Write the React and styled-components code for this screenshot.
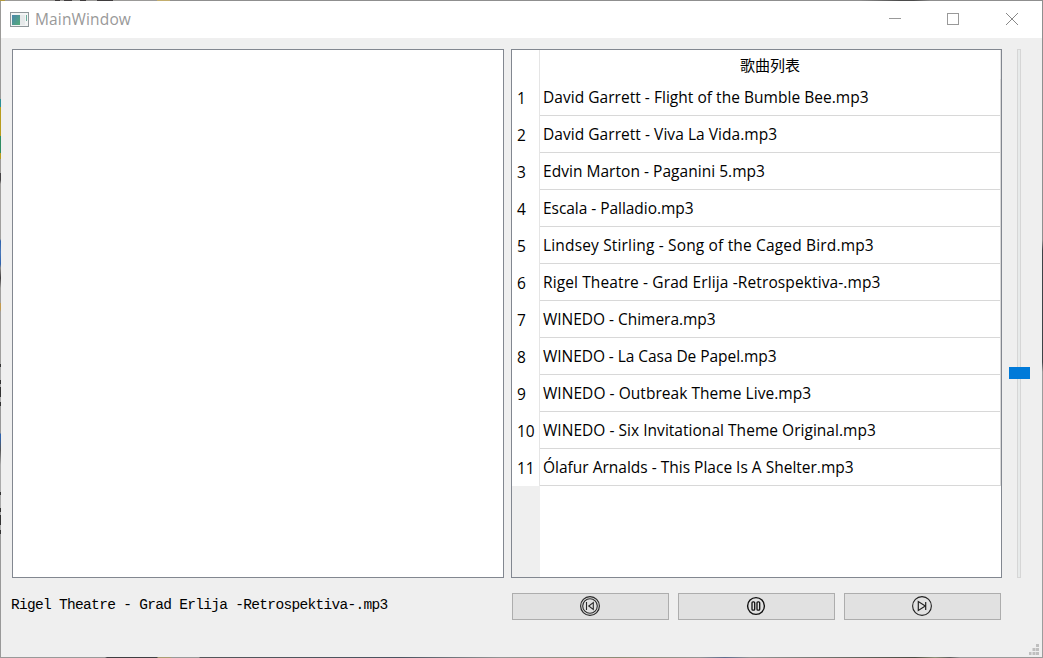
import React from "react";
import styled, { createGlobalStyle } from "styled-components";

const GlobalStyle = createGlobalStyle`
  * { box-sizing: border-box; }
  body { margin: 0; overflow: hidden; font-family: "Open Sans", "Noto Sans", "Noto Sans CJK SC", sans-serif; }
`;

const Desktop = styled.div`
  width: 1043px;
  height: 658px;
  padding: 1px;
  background:
    linear-gradient(90deg, #b39b3c 0 5px, #9b9a98 5px 55px, #3e3b3c 55px 60px, #9b9a98 60px 64px, #3e3b3c 64px 72px, #9b9a98 72px 80px, #3e3b3c 80px 86px, #9b9a98 86px 97px, #3e3b3c 97px 113px, #9b9a98 113px 157px, #c3ae6e 157px 170px, #8f8f8f 170px 860px, #4b4b4b 900px 914px, #8f8f8f 930px) 0 0 / 100% 1px no-repeat,
    linear-gradient(#9b9a98 0 99px, #2a8f95 99px 107px, #b89c1d 107px 136px, #2f8d62 136px 153px, #b89c1d 153px 159px, #9b9a98 159px 173px, #454344 173px 180px, #a09f9d 184px 239px, #2e62ad 241px, #4a78b8 252px, #2e62ad 264px, #8d8b89 268px, #403e3f 278px, #a09f9d 288px 303px, #c39a4d 303px 309px, #a09f9d 312px 364px, #333 364px 367px, #aaa 367px 380px, #333 380px 384px, #aaa 384px 387px, #333 387px 397px, #aaa 397px 402px, #333 402px 406px, #999 406px 433px, #2e62ad 434px 437px, #555 450px, #aaa 465px 492px, #333 492px 495px, #aaa 495px 508px, #333 508px 512px, #aaa 512px 515px, #333 515px 525px, #aaa 525px 530px, #333 530px 534px, #999 534px) 0 0 / 1px 100% no-repeat,
    linear-gradient(#8f8f8f 0 240px, #3e4246 250px 362px, #9c9c9c 372px) 100% 0 / 1px 100% no-repeat,
    linear-gradient(90deg, #999 0 105px, #3f3f42 107px 157px, #a79d73 158px 170px, #999 172px 199px, #55565a 200px, #4b5360 400px, #949494 500px, #8c8b75 620px, #949494 700px, #5d6c8c 725px, #949494 750px, #4a4b42 915px, #8c9078 935px, #5b5c5c 950px, #999 960px) 0 100% / 100% 1px no-repeat;
`;

const Window = styled.div`
  width: 1041px;
  height: 656px;
  background: #efefef;
  display: flex;
  flex-direction: column;
  position: relative;
`;

const TitleBar = styled.header`
  height: 37px;
  flex: none;
  background: #fff;
  display: flex;
  align-items: center;
  padding: 0 1px 2px 9px;
`;

const Title = styled.span`
  flex: 1;
  margin-left: 5px;
  font-size: 15.5px;
  line-height: 20px;
  letter-spacing: 0.15px;
  color: #999;
`;

const Caption = styled.div`
  width: 58.5px;
  height: 35px;
  display: flex;
  align-items: center;
  justify-content: center;
`;

const Body = styled.main`
  display: flex;
  padding: 11px 0 0 11px;
`;

const Panel = styled.section`
  width: ${(p) => p.$width}px;
  height: 529px;
  border: 1px solid #828790;
  background: #fff;
`;

const RightColumn = styled.div`
  margin-left: 7px;
`;

const Table = styled.div`
  height: 100%;
  display: grid;
  grid-template-columns: 28px 1fr;
  grid-template-rows: 29px repeat(11, 37px) 1fr;
`;

const Corner = styled.div`
  border-right: 1px solid #e5e5e5;
`;

const HeaderCell = styled.div`
  display: flex;
  justify-content: center;
  align-items: center;
  font-family: "Noto Sans CJK SC", sans-serif;
  font-size: 15px;
  padding-bottom: 1px;
  border-right: 1px solid #e5e5e5;
`;

const IndexCell = styled.div`
  border-right: 1px solid #e5e5e5;
  padding-left: 5px;
  font-size: 15.5px;
  line-height: 39px;
  height: 37px;
  color: #000;
`;

const SongCell = styled.div`
  border-right: 1px solid #d8d8d8;
  border-bottom: 1px solid #d8d8d8;
  padding-left: 3px;
  font-size: 15.5px;
  line-height: 37px;
  white-space: nowrap;
  color: #000;
  letter-spacing: ${(p) => p.$tracking}px;
`;

const IndexFiller = styled.div`
  background: #efefef;
`;

const Slider = styled.div`
  width: 21px;
  height: 529px;
  margin-left: 7px;
  display: flex;
  flex-direction: column;
  align-items: center;
`;

const Groove = styled.div`
  width: 4px;
  height: ${(p) => p.$length}px;
  flex: none;
  margin-right: 1px;
  background: #e7eaea;
  border: solid #d6d6d6;
  border-width: ${(p) => (p.$end ? "0 1px 1px" : "1px 1px 0")};
`;

const Handle = styled.div`
  width: 21px;
  height: 12px;
  flex: none;
  background: #007ad9;
`;

const Controls = styled.footer`
  display: flex;
  padding: 15px 0 0 10px;
`;

const NowPlaying = styled.div`
  width: 501px;
  height: 24px;
  font-family: "Liberation Mono", monospace;
  font-size: 14.5px;
  line-height: 24px;
  letter-spacing: -0.69px;
  white-space: pre;
  color: #000;
`;

const Button = styled.button`
  width: 157px;
  height: 27px;
  margin: 0 9px 0 0;
  padding: 0;
  border: 1px solid #adadad;
  background: #e1e1e1;
  display: flex;
  align-items: center;
  justify-content: center;
`;

const Grip = styled.svg`
  position: absolute;
  right: 3px;
  bottom: 2px;
`;

const songs = [
  ["David Garrett - Flight of the Bumble Bee.mp3", 0.033],
  ["David Garrett - Viva La Vida.mp3", 0.047],
  ["Edvin Marton - Paganini 5.mp3", 0.033],
  ["Escala - Palladio.mp3", -0.045],
  ["Lindsey Stirling - Song of the Caged Bird.mp3", 0.163],
  ["Rigel Theatre - Grad Erlija -Retrospektiva-.mp3", 0.113],
  ["WINEDO - Chimera.mp3", -0.03],
  ["WINEDO - La Casa De Papel.mp3", -0.057],
  ["WINEDO - Outbreak Theme Live.mp3", 0.044],
  ["WINEDO - Six Invitational Theme Original.mp3", 0.03],
  ["Ólafur Arnalds - This Place Is A Shelter.mp3", 0],
];

function AppIcon() {
  return (
    <svg width="20" height="16" viewBox="0 0 20 16">
      <defs>
        <linearGradient id="screen" x1="0" y1="0" x2="1" y2="1">
          <stop offset="0" stopColor="#4b86ad" />
          <stop offset="1" stopColor="#55ad79" />
        </linearGradient>
      </defs>
      <rect x="0.5" y="1.5" width="18" height="14" fill="#f3f5f5" stroke="#8f979a" />
      <rect x="2" y="4" width="8" height="10" fill="url(#screen)" />
      <rect x="10" y="4" width="5" height="10" fill="#e6e9ea" />
      <path d="M16.5 4v6" stroke="#6aae9c" />
    </svg>
  );
}

export default function App() {
  return (
    <Desktop>
      <GlobalStyle />
      <Window>
        <TitleBar>
          <AppIcon />
          <Title>MainWindow</Title>
          <Caption>
            <svg width="12" height="12"><path d="M0 5.5h12" stroke="#999" /></svg>
          </Caption>
          <Caption>
            <svg width="12" height="12"><rect x=".5" y=".5" width="11" height="11" fill="none" stroke="#999" /></svg>
          </Caption>
          <Caption>
            <svg width="12" height="12"><path d="M0 0l12 12M12 0L0 12" stroke="#888" /></svg>
          </Caption>
        </TitleBar>
        <Body>
          <Panel $width={492} />
          <RightColumn>
            <Panel $width={491}>
              <Table>
                <Corner />
                <HeaderCell>歌曲列表</HeaderCell>
                {songs.map(([name, tracking], i) => (
                  <React.Fragment key={name}>
                    <IndexCell>{i + 1}</IndexCell>
                    <SongCell $tracking={tracking}>{name}</SongCell>
                  </React.Fragment>
                ))}
                <IndexFiller />
              </Table>
            </Panel>
          </RightColumn>
          <Slider>
            <Groove $length={318} />
            <Handle />
            <Groove $length={199} $end />
          </Slider>
        </Body>
        <Controls>
          <NowPlaying>Rigel Theatre - Grad Erlija -Retrospektiva-.mp3</NowPlaying>
          <Button aria-label="Previous">
            <svg width="21" height="21" viewBox="0 0 21 21" fill="none" stroke="#2a2a2a">
              <circle cx="10" cy="10" r="9.4" strokeWidth="1.2" />
              <circle cx="10" cy="10" r="7.3" strokeWidth="1.1" />
              <path d="M6.500 6v8M13.300 6.500v7L8.700 10z" strokeWidth="1.1" />
            </svg>
          </Button>
          <Button aria-label="Pause">
            <svg width="21" height="21" viewBox="0 0 21 21" fill="none" stroke="#111">
              <circle cx="10" cy="10" r="8.4" strokeWidth="1.4" />
              <rect x="6" y="5.800" width="2.7" height="8.4" rx="1" strokeWidth="1.3" />
              <rect x="11" y="5.800" width="2.7" height="8.4" rx="1" strokeWidth="1.3" />
            </svg>
          </Button>
          <Button aria-label="Next">
            <svg width="21" height="21" viewBox="0 0 21 21" fill="none" stroke="#222">
              <circle cx="10" cy="10" r="9.4" strokeWidth="1.1" />
              <path d="M13.700 6v8M6.300 5.500v9l7-4.500z" strokeWidth="1.2" />
            </svg>
          </Button>
        </Controls>
        <Grip width="10" height="11" fill="#bfbfbf">
          <path d="M7 0h3v3h-3zM3.500 4h3v3h-3zM7 4h3v3h-3zM0 8h2.500v3h-2.500zM3.500 8h3v3h-3zM7 8h3v3h-3z" />
        </Grip>
      </Window>
    </Desktop>
  );
}
